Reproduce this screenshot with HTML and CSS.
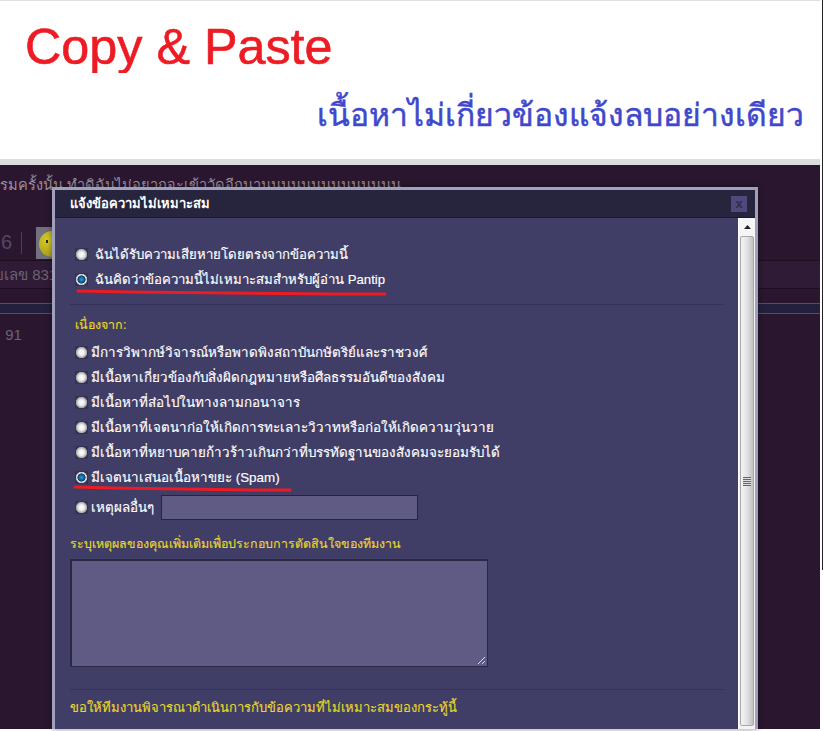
FILE: index.html
```html
<!DOCTYPE html>
<html lang="th">
<head>
<meta charset="utf-8">
<title>Copy &amp; Paste</title>
<link rel="stylesheet" href="styles.css">
</head>
<body>
<div class="shot">
  <header class="banner">
    <div class="copy"><span class="copy-clip">Copy &amp; Paste</span></div>
    <div class="tagline">เนื้อหาไม่เกี่ยวข้องแจ้งลบอย่างเดียว</div>
  </header>
  <div class="page">
    <p class="bg-story">รมครั้งนั้น ทำดิฉันไม่อยากจะเข้าวัดอีกนานนนนนนนนนนนนนน</p>
    <div class="bg-user">
      <span class="bg-count">6</span>
      <span class="bg-divider"></span>
      <span class="bg-avatar"><span class="bg-face"><span class="bg-eye"></span></span></span>
    </div>
    <div class="bg-meta">ยเลข 831</div>
    <div class="bg-band"></div>
    <div class="bg-reply">ี่ 91</div>
  </div>

  <section class="modal">
    <div class="modal-head">
      <h2 class="modal-title">แจ้งข้อความไม่เหมาะสม</h2>
      <span class="modal-close">x</span>
    </div>
    <div class="modal-main">
      <form class="modal-body">
        <label class="opt opt-first"><span class="radio"></span>ฉันได้รับความเสียหายโดยตรงจากข้อความนี้</label>
        <label class="opt"><span class="radio on"></span>ฉันคิดว่าข้อความนี้ไม่เหมาะสมสำหรับผู้อ่าน Pantip</label>
        <hr class="rule rule-a">
        <div class="note note-because">เนื่องจาก:</div>
        <label class="opt opt-tight"><span class="radio"></span>มีการวิพากษ์วิจารณ์หรือพาดพิงสถาบันกษัตริย์และราชวงศ์</label>
        <label class="opt opt-tight"><span class="radio"></span>มีเนื้อหาเกี่ยวข้องกับสิ่งผิดกฎหมายหรือศีลธรรมอันดีของสังคม</label>
        <label class="opt opt-tight"><span class="radio"></span>มีเนื้อหาที่ส่อไปในทางลามกอนาจาร</label>
        <label class="opt opt-tight"><span class="radio"></span>มีเนื้อหาที่เจตนาก่อให้เกิดการทะเลาะวิวาทหรือก่อให้เกิดความวุ่นวาย</label>
        <label class="opt opt-tight"><span class="radio"></span>มีเนื้อหาที่หยาบคายก้าวร้าวเกินกว่าที่บรรทัดฐานของสังคมจะยอมรับได้</label>
        <label class="opt opt-tight"><span class="radio on"></span>มีเจตนาเสนอเนื้อหาขยะ (Spam)</label>
        <div class="opt opt-other opt-tight"><span class="radio"></span>เหตุผลอื่นๆ<span class="field"></span></div>
        <div class="note note-detail">ระบุเหตุผลของคุณเพิ่มเติมเพื่อประกอบการตัดสินใจของทีมงาน</div>
        <div class="area">
          <svg class="grip" width="9" height="9" viewBox="0 0 9 9"><path d="M1 8 8 1M5 8 8 5" stroke="#d8d8e4" stroke-width="1" fill="none"/></svg>
        </div>
        <hr class="rule rule-b">
        <div class="note note-last">ขอให้ทีมงานพิจารณาดำเนินการกับข้อความที่ไม่เหมาะสมของกระทู้นี้</div>
      </form>
      <div class="scroll">
        <div class="scroll-up"><svg width="7" height="4" viewBox="0 0 7 4"><path d="M3.500 0 7 4H0z" fill="#222"/></svg></div>
        <div class="scroll-thumb"><span class="thumb-grip"></span></div>
      </div>
    </div>
  </section>

  <svg class="marks" width="824" height="731" viewBox="0 0 824 731">
    <path d="M78 291 131 292 232 293 333 294 385 294" fill="none" stroke="#ed1c24" stroke-width="3" stroke-linecap="round"/>
    <path d="M75 487 112 488 183 489 253 490 290 490" fill="none" stroke="#ed1c24" stroke-width="3" stroke-linecap="round"/>
  </svg>
  <span class="edge"></span>
</div>
</body>
</html>
```
FILE: styles.css
```css
* { box-sizing: border-box; }
html, body { margin: 0; padding: 0; background: #fff; }
.shot {
  position: relative;
  width: 824px;
  height: 731px;
  overflow: hidden;
  font-family: "Liberation Sans", "Noto Sans", "DejaVu Sans", sans-serif;
}
.banner {
  height: 159px;
  width: 820px;
  border-top: 1px solid #e0e0e0;
  background: #fff;
  padding: 20px 16px 0 25px;
}
.copy { height: 52px; overflow: hidden; }
.copy-clip {
  display: block;
  font-size: 50.3px;
  line-height: 52px;
  color: #ed1c24;
  -webkit-text-stroke: 0.6px #ed1c24;
}
.tagline {
  margin-top: 22px;
  text-align: right;
  font-size: 31.8px;
  line-height: 40px;
  font-weight: 400;
  color: #3f48cc;
  -webkit-text-stroke: 0.5px #3f48cc;
}
.page {
  width: 820px;
  height: 570px;
  border-top: 6px solid #dcdcdc;
  background: #2a172f;
  color: #6e6272;
  font-size: 15px;
}
.bg-story {
  margin: 0;
  padding: 10px 0 0 0;
  height: 60px;
  font-size: 14.65px;
  line-height: 20px;
  white-space: nowrap;
  overflow: hidden;
  color: #9a8fa0;
}
.bg-user { display: flex; align-items: center; height: 36px; gap: 10px; border-bottom: 1px solid #1d0f22; }
.bg-count { font-size: 20px; width: 11px; padding-left: 1px; color: #574763; }
.bg-divider { width: 1px; height: 22px; background: #4f3d55; }
.bg-avatar { width: 16px; height: 32px; margin-left: 4px; background: #70707e; overflow: hidden; position: relative; }
.bg-face {
  position: absolute;
  left: 3px;
  top: 4px;
  width: 26px;
  height: 26px;
  border-radius: 50%;
  background: radial-gradient(circle at 35% 35%, #d8cc2a, #a89c14 75%, #746a10);
}
.bg-eye { position: absolute; left: 7px; top: 9px; width: 2px; height: 3px; background: #2c2808; }
.bg-meta {
  height: 28px;
  line-height: 28px;
  text-indent: -5px;
  background: #2f1b35;
  border-bottom: 1px solid #1d0f22;
}
.bg-band { height: 11px; margin-top: 14px; background: #23203d; border-top: 1px solid #574d64; border-bottom: 1px solid #574d64; }
.bg-reply { margin-top: 9px; padding-left: 1px; }

.modal {
  position: absolute;
  left: 52px;
  top: 187px;
  width: 706px;
  height: 542px;
  border: 3px solid #a09fbc;
  border-bottom: 0;
  background: #403d66;
  box-shadow: 0 0 6px rgba(0, 0, 0, 0.45);
  display: flex;
  flex-direction: column;
}
.modal-head {
  height: 28px;
  flex: none;
  display: flex;
  align-items: center;
  justify-content: space-between;
  padding: 0 8px 0 15px;
  background: #27253d;
  border-bottom: 1px solid #1a1830;
}
.modal-title { margin: 0; font-size: 13px; font-weight: 700; color: #fff; }
.modal-close {
  width: 16px;
  height: 16px;
  background: #4f4a7c;
  color: #2f2c50;
  font-size: 13px;
  font-weight: 700;
  line-height: 15px;
  text-align: center;
}
.modal-main { flex: 1; display: flex; min-height: 0; }
.modal-body { flex: 1; padding: 0 15px; color: #fff; font-size: 13.2px; -webkit-text-stroke: 0.15px currentColor; overflow: hidden; }
.opt { display: flex; align-items: center; height: 25px; line-height: 25px; white-space: nowrap; }
.opt-first { margin-top: 24px; }
.radio {
  flex: none;
  width: 13px;
  height: 13px;
  margin: 0 7px 0 5px;
  background: radial-gradient(circle closest-side at 50% 50%, #fff 0, #ececec 45%, #a4a4a8 82%, #35334f 92%);
}
.radio.on { background: radial-gradient(circle closest-side at 50% 50%, #2f9ad6 0, #0d69a6 36%, #143c66 58%, #f0f0f4 68%, #b8b8bc 84%, #35334f 92%); }
.opt-tight .radio { margin-right: 3px; }
.opt-tight { font-size: 13.4px; }
.rule { margin: 0; height: 1px; border: 0; background: #35325a; }
.rule-a { margin-top: 12px; }
.rule-b { margin-top: 22px; }
.note { color: #e8d828; font-size: 12.45px; line-height: 18px; }
.note-because { margin-top: 11px; margin-bottom: 6px; padding-left: 5px; }
.note-detail { margin-top: 13px; }
.note-last { margin-top: 9px; font-size: 13px; }
.opt-other { height: 30px; margin-top: 2px; }
.field {
  width: 257px;
  height: 25px;
  margin-left: 7px;
  background: #5f5b85;
  border: 1px solid #25233f;
}
.area {
  position: relative;
  width: 418px;
  height: 108px;
  margin-top: 6px;
  background: #5f5b85;
  border: 2px solid #2a2845;
  border-right-width: 1px;
  border-bottom-width: 1px;
}
.grip { position: absolute; right: 1px; bottom: 1px; }
.scroll {
  flex: none;
  width: 17px;
  background: #f3f3f3;
  border-left: 1px solid #fff;
  display: flex;
  flex-direction: column;
}
.scroll-up { height: 18px; display: flex; align-items: center; justify-content: center; background: #f5f5f5; }
.scroll-thumb {
  flex: 1;
  margin: 0 1px 3px 1px;
  border: 1px solid #a8a8a8;
  border-radius: 2px;
  background: linear-gradient(90deg, #f4f4f4, #e2e2e2 50%, #c0c0c0);
  display: flex;
  align-items: center;
  justify-content: center;
}
.thumb-grip { width: 8px; height: 9px; background: repeating-linear-gradient(180deg, #666 0 1px, #ddd 1px 2px); }
.marks { position: absolute; left: 0; top: 0; pointer-events: none; }
.edge { position: absolute; left: 822px; top: 0; width: 1px; height: 570px; background: #222; }
```
